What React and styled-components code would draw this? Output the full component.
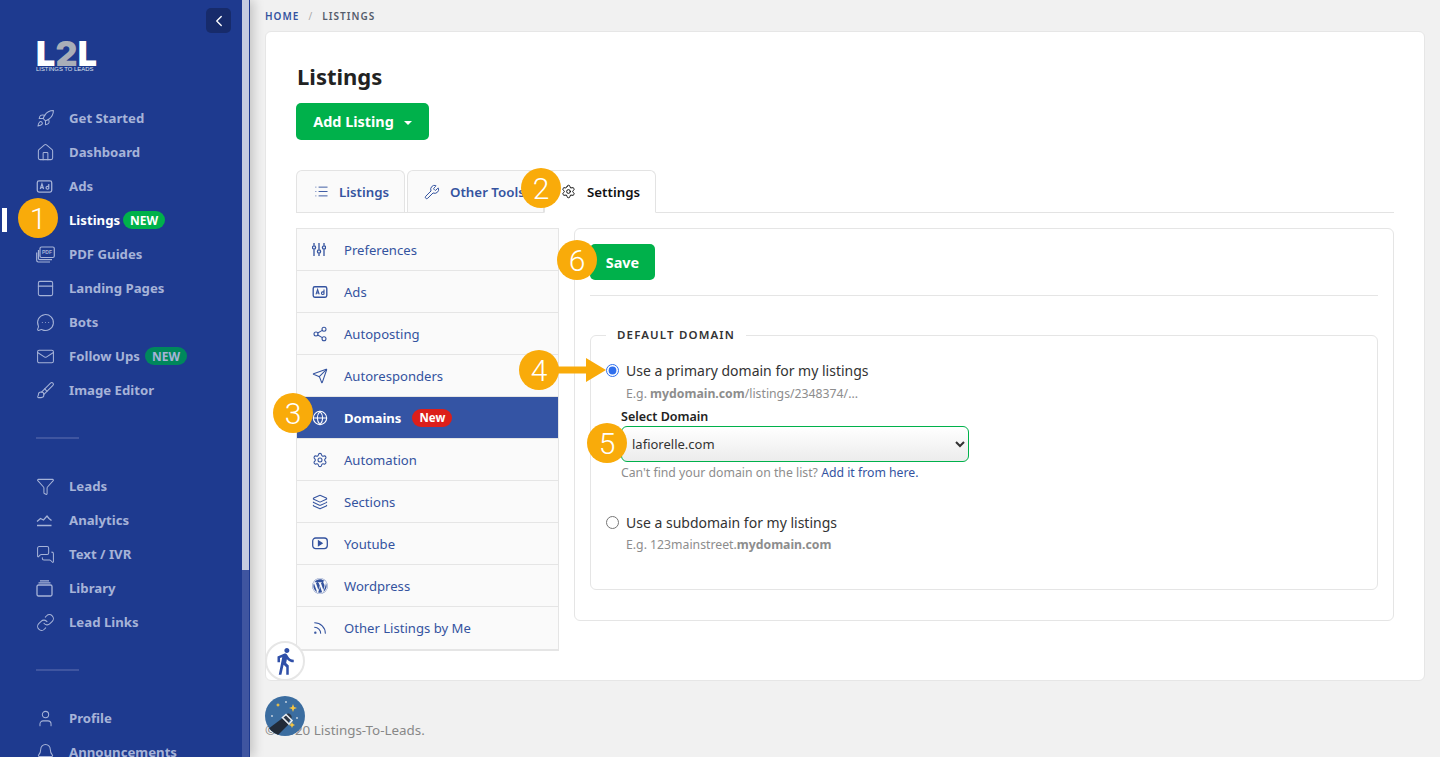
import React from "react";
import styled, { createGlobalStyle } from "styled-components";
import {
  Rocket, House, PanelTop, MessageCircleMore, Mail, Brush, Funnel, MessagesSquare, Link, User, Bell,
  Share2, Send, Globe, Settings, Layers, Rss, List, Wrench, ChevronLeft,
} from "lucide-react";
import { FaWordpress } from "react-icons/fa";
import { MdDirectionsWalk } from "react-icons/md";

const Global = createGlobalStyle`
  html, body { margin: 0; padding: 0; height: 100%; overflow: hidden; background: #f1f1f1; }
  * { box-sizing: border-box; }
  body { font-family: "Noto Sans", "Open Sans", sans-serif; font-size: 14px; color: #222; }
`;

const Page = styled.div`
  position: relative;
  display: flex;
  width: 100vw;
  height: 100vh;
  overflow: hidden;
`;

const Sidebar = styled.aside`
  flex: 0 0 250px;
  display: flex;
  height: 100%;
  background: #1e3a8f;
  border-right: 1px solid #1e3a8f;
  box-shadow: 4px 0 10px rgba(0, 0, 0, 0.18);
  z-index: 2;
`;

const SideScroll = styled.div`
  position: relative;
  flex: 1;
  padding: 41px 0 0 36px;
  overflow: hidden;
`;

const Scrollbar = styled.div`
  flex: 0 0 7px;
  height: 100%;
  background: #3f55a0;
`;

const ScrollThumb = styled.div`
  height: 570px;
  background: #c5cce0;
`;

const Collapse = styled.button`
  position: absolute;
  top: 8px;
  right: 11px;
  width: 25px;
  height: 25px;
  padding: 0;
  border: 0;
  border-radius: 5px;
  display: flex;
  align-items: center;
  justify-content: center;
  background: #172b6b;
  color: #fff;
`;

const Logo = styled.div`
  width: 61px;
  height: 30px;
  color: #fff;
  display: flex;
  flex-direction: column;
  margin-bottom: 30px;
`;

const LogoMark = styled.div`
  display: flex;
  justify-content: space-between;
  font-family: "Inter", "Liberation Sans", sans-serif;
  font-weight: 900;
  font-size: 34px;
  line-height: 25px;
  height: 25px;
  letter-spacing: 0;
`;

const LogoTwo = styled.span`
  color: #a9aeb8;
`;

const LogoTag = styled.div`
  font-family: "Liberation Sans", sans-serif;
  font-size: 5.9px;
  line-height: 6px;
  white-space: nowrap;
  color: #dfe3ee;
`;

const NavList = styled.nav`
  display: flex;
  flex-direction: column;
`;

const NavItem = styled.a`
  position: relative;
  display: flex;
  align-items: center;
  height: 34px;
  font-size: 13.2px;
  font-weight: 700;
  color: ${(p) => (p.$active ? "#fff" : "#a6b3d8")};
  white-space: nowrap;
  &::before {
    content: ${(p) => (p.$active ? '""' : "none")};
    position: absolute;
    left: -34px;
    top: 5px;
    width: 5px;
    height: 24px;
    background: #fff;
  }
`;

const NavIcon = styled.span`
  flex: 0 0 33px;
  display: flex;
  align-items: center;
  color: #a6b3d8;
`;

const NewPill = styled.span`
  margin-left: ${(p) => (p.$dim ? "5px" : "3px")};
  height: 18px;
  width: 42px;
  border-radius: 9px;
  display: flex;
  align-items: center;
  justify-content: center;
  font-size: 12px;
  font-weight: 700;
  background: ${(p) => (p.$dim ? "#00885c" : "#00b14b")};
  color: ${(p) => (p.$dim ? "#a6b3d8" : "#fff")};
`;

const NavDivider = styled.div`
  width: 43px;
  height: 2px;
  margin: 30px 0 30px;
  background: #3f55a0;
`;

const Main = styled.main`
  flex: 1;
  min-width: 0;
  padding: 0 15px;
`;

const Crumbs = styled.div`
  display: flex;
  align-items: center;
  gap: 9px;
  height: 31px;
  font-size: 10px;
  font-weight: 600;
  letter-spacing: 1.05px;
  color: #555c6b;
`;

const CrumbLink = styled.span`
  color: #34539f;
`;

const CrumbSep = styled.span`
  color: #aaa;
  font-weight: 400;
`;

const Card = styled.section`
  background: #fff;
  border: 1px solid #e6e6e6;
  border-radius: 6px;
  padding: 29px 30px 30px 30px;
  height: 650px;
`;

const Title = styled.h1`
  margin: 0 0 12px 1px;
  font-size: 22px;
  line-height: 30px;
  font-weight: 700;
  color: #222;
`;

const GreenButton = styled.button`
  display: flex;
  align-items: center;
  justify-content: center;
  gap: 10px;
  border: 0;
  border-radius: 5px;
  background: #00b14b;
  color: #fff;
  font-family: inherit;
  font-weight: 700;
  font-size: ${(p) => p.$fs};
  width: ${(p) => p.$w};
  height: ${(p) => p.$h};
`;

const Caret = styled.span`
  width: 0;
  height: 0;
  margin-top: 2px;
  border-left: 4px solid transparent;
  border-right: 4px solid transparent;
  border-top: 4px solid #fff;
`;

const Tabs = styled.div`
  display: flex;
  gap: 2px;
  height: 43px;
  margin-top: 30px;
  border-bottom: 1px solid #e3e3e3;
`;

const Tab = styled.div`
  display: flex;
  align-items: center;
  gap: ${(p) => p.$gap};
  width: ${(p) => p.$w};
  margin-left: ${(p) => p.$ml || 0};
  padding-left: ${(p) => p.$pl};
  height: ${(p) => (p.$active ? "43px" : "42px")};
  border: 1px solid #e3e3e3;
  border-bottom: ${(p) => (p.$active ? "1px solid #fff" : "0")};
  border-radius: 6px 6px 0 0;
  background: ${(p) => (p.$active ? "#fff" : "#fafafa")};
  color: ${(p) => (p.$active ? "#111" : "#34539f")};
  font-weight: 600;
  font-size: 13.3px;
  white-space: nowrap;
  overflow: hidden;
`;

const Body = styled.div`
  display: flex;
  align-items: flex-start;
  gap: 15px;
  margin-top: 15px;
`;

const SideList = styled.div`
  flex: 0 0 263px;
  border: 1px solid #e5e5e5;
  border-bottom-width: 2px;
  background: #fafafa;
`;

const SideItem = styled.div`
  display: flex;
  align-items: center;
  height: 42px;
  padding-left: 15px;
  border-bottom: ${(p) => (p.$last ? "0" : "1px solid #e5e5e5")};
  background: ${(p) => (p.$active ? "#3454a4" : "transparent")};
  color: ${(p) => (p.$active ? "#fff" : "#34539f")};
  font-weight: ${(p) => (p.$active ? 700 : 400)};
  font-size: 13.1px;
`;

const SideIcon = styled.span`
  flex: 0 0 32px;
  display: flex;
  align-items: center;
`;

const RedPill = styled.span`
  margin-left: 11px;
  width: 40px;
  height: 18px;
  border-radius: 9px;
  display: flex;
  align-items: center;
  justify-content: center;
  background: #dc1f1a;
  color: #fff;
  font-size: 11.5px;
  font-weight: 700;
`;

const Panel = styled.div`
  flex: 1;
  height: 393px;
  padding: 15px;
  border: 1px solid #e5e5e5;
  border-radius: 6px;
`;

const Rule = styled.hr`
  margin: 15px 0 32px;
  border: 0;
  border-top: 1px solid #e5e5e5;
`;

const Fieldset = styled.fieldset`
  margin: 0;
  padding: 18px 15px 0 15px;
  height: 262px;
  border: 1px solid #e5e5e5;
  border-radius: 6px;
`;

const Legend = styled.legend`
  margin-left: 0;
  padding: 0 11px;
  font-size: 11.5px;
  line-height: 14px;
  font-weight: 600;
  letter-spacing: 1.15px;
  color: #333;
`;

const RadioRow = styled.label`
  display: flex;
  align-items: center;
  gap: 7px;
  height: 20px;
  margin-top: ${(p) => p.$mt || 0};
  color: #333;
  font-size: 14px;
`;

const Radio = styled.input`
  width: 13px;
  height: 13px;
  margin: 0;
  accent-color: #2f6fed;
`;

const Hint = styled.div`
  margin-top: ${(p) => p.$mt || "5px"};
  margin-left: ${(p) => p.$ml || "20px"};
  line-height: 18px;
  font-size: 12.25px;
  color: #8d8d8d;
`;

const HintLink = styled.span`
  color: #34539f;
`;

const DomainLabel = styled.div`
  margin: 6px 0 0 15px;
  font-size: 12.5px;
  line-height: 16px;
  font-weight: 600;
  color: #222;
`;

const DomainSelect = styled.select`
  display: block;
  width: 348px;
  height: 36px;
  margin: 1px 0 0 15px;
  padding: 0 6px;
  border: 1px solid #00b14b;
  border-radius: 6px;
  background: linear-gradient(#fff, #ececec);
  font-family: inherit;
  font-size: 13px;
  color: #333;
`;

const Footer = styled.div`
  margin-top: 40px;
  font-size: 13.4px;
  line-height: 18px;
  color: #888;
`;

const Marker = styled.div`
  position: absolute;
  left: ${(p) => p.$x - 20}px;
  top: ${(p) => p.$y - 20}px;
  width: 40px;
  height: 40px;
  border-radius: 50%;
  display: flex;
  align-items: center;
  justify-content: center;
  background: #f9ab0a;
  color: #fff;
  font-family: "Roboto", "Liberation Sans", sans-serif;
  font-weight: 300;
  font-size: 30px;
  z-index: 5;
`;

const ArrowMark = styled.svg`
  position: absolute;
  left: 555px;
  top: 358px;
  z-index: 5;
`;

const Floating = styled.div`
  position: absolute;
  left: 265px;
  top: ${(p) => p.$top}px;
  width: 40px;
  height: 40px;
  border-radius: 50%;
  display: flex;
  align-items: center;
  justify-content: center;
  overflow: hidden;
  border: ${(p) => (p.$wand ? "0" : "2px solid #e6e6e6")};
  background: ${(p) => (p.$wand ? "#3b6da0" : "#fff")};
  color: #2f4fa8;
  z-index: 4;
`;

const AdIcon = ({ size = 17, w = 1.5 }) => (
  <svg width={size} height={size} viewBox="0 0 20 20" fill="none" stroke="currentColor" strokeWidth={w}>
    <rect x="1.500" y="3.500" width="17" height="13" rx="2" />
    <path d="M5 13l2-6 2 6M5.700 11.300h2.600M15 7v6M15 10.500c-.5-1-3.200-1-3.200 1s2.700 2 3.200.8" strokeWidth="1.400" />
  </svg>
);

const PdfIcon = () => (
  <svg width="19" height="17" viewBox="0 0 19 17" fill="none" stroke="currentColor" strokeWidth="1.200">
    <rect x="4" y="1" width="14.300" height="10.500" rx="1.500" />
    <path d="M2.500 4v8.500c0 .8.500 1.200 1.300 1.200H16M.7 6.500v7.800c0 1 .6 1.700 1.600 1.700H14" />
    <text x="6" y="8.300" fontSize="5" fontWeight="700" stroke="none" fill="currentColor" fontFamily="Liberation Sans">PDF</text>
  </svg>
);

const ChartIcon = () => (
  <svg width="17" height="17" viewBox="0 0 17 17" fill="none" stroke="currentColor" strokeWidth="1.300">
    <path d="M1 13.500h14.500M1 9.500l3.500-3 3 1.500L11 4l2 2.500 2.500 2" />
  </svg>
);

const LibraryIcon = () => (
  <svg width="17" height="17" viewBox="0 0 17 17" fill="none" stroke="currentColor" strokeWidth="1.300">
    <rect x="1" y="5" width="15" height="11" rx="1.500" />
    <path d="M2.500 2.800h12M4 .8h9" />
  </svg>
);

const YoutubeIcon = () => (
  <svg width="16" height="13" viewBox="0 0 16 13" fill="none" stroke="currentColor" strokeWidth="1.300">
    <rect x=".7" y="1" width="14.600" height="10.600" rx="3" />
    <path d="M6.500 4v4.500l3.500-2.200z" fill="currentColor" />
  </svg>
);

const SlidersIcon = () => (
  <svg width="14" height="15" viewBox="0 0 14 15" fill="none" stroke="currentColor" strokeWidth="1.300">
    <path d="M2 1v2.500M2 7.500V14M7 1v6.500M7 11.500V14M12 1v2.500M12 7.500V14" />
    <circle cx="2" cy="5.500" r="1.600" />
    <circle cx="7" cy="9.500" r="1.600" />
    <circle cx="12" cy="5.500" r="1.600" />
  </svg>
);

const WandIcon = () => (
  <svg width="40" height="40" viewBox="0 0 40 40">
    <path d="M3 33L19 21l6 6-13 13H8z" fill="#222b38" />
    <path d="M18.500 20.500l3-2.500c1.500-1 3.500-.5 4.500 1s1 3.500-.5 4.500l-2.500 3z" fill="#2c3644" />
    <path d="M17.500 21.500l3.500-3 6 6-3 3.500z" fill="none" stroke="#e6ebf0" strokeWidth="1.600" />
    <path d="M28 8l1.100 2.900 2.900 1.100-2.900 1.100L28 16l-1.100-2.900-2.900-1.100 2.900-1.100z" fill="#f5c542" />
    <path d="M27 26l.9 2.100 2.100.9-2.100.9-.9 2.100-.9-2.100-2.100-.9 2.100-.9z" fill="#f5c542" />
    <path d="M13 7l.7 1.300 1.300.7-1.300.7-.7 1.300-.7-1.300L11 9l1.300-.7z" fill="#f5c542" />
    <circle cx="21" cy="6" r=".9" fill="#cfd8e3" />
    <circle cx="32" cy="22" r=".9" fill="#cfd8e3" />
    <circle cx="7" cy="20" r=".9" fill="#cfd8e3" />
  </svg>
);

const IC = { size: 19, strokeWidth: 1.3 };

const navA = [
  [<Rocket {...IC} />, "Get Started"],
  [<House {...IC} />, "Dashboard"],
  [<AdIcon />, "Ads"],
  [<AdIcon />, "Listings", "active"],
  [<PdfIcon />, "PDF Guides"],
  [<PanelTop {...IC} />, "Landing Pages"],
  [<MessageCircleMore {...IC} />, "Bots"],
  [<Mail {...IC} />, "Follow Ups", "dim"],
  [<Brush {...IC} />, "Image Editor"],
];
const navB = [
  [<Funnel {...IC} />, "Leads"],
  [<ChartIcon />, "Analytics"],
  [<MessagesSquare {...IC} />, "Text / IVR"],
  [<LibraryIcon />, "Library"],
  [<Link {...IC} />, "Lead Links"],
];
const navC = [
  [<User {...IC} />, "Profile"],
  [<Bell {...IC} />, "Announcements"],
];

const SI = { size: 16, strokeWidth: 1.6 };
const sideItems = [
  [<SlidersIcon />, "Preferences"],
  [<AdIcon size={16} w={1.700} />, "Ads"],
  [<Share2 {...SI} />, "Autoposting"],
  [<Send {...SI} />, "Autoresponders"],
  [<Globe {...SI} />, "Domains", true],
  [<Settings {...SI} />, "Automation"],
  [<Layers {...SI} />, "Sections"],
  [<YoutubeIcon />, "Youtube"],
  [<FaWordpress size={16} />, "Wordpress"],
  [<Rss {...SI} />, "Other Listings by Me"],
];

const renderNav = (items) =>
  items.map(([icon, label, flag]) => (
    <NavItem key={label} $active={flag === "active"}>
      <NavIcon>{icon}</NavIcon>
      {label}
      {flag && <NewPill $dim={flag === "dim"}>NEW</NewPill>}
    </NavItem>
  ));

export default function App() {
  return (
    <Page>
      <Global />
      <Sidebar>
        <SideScroll>
          <Collapse aria-label="Collapse"><ChevronLeft size={18} strokeWidth={1.800} /></Collapse>
          <Logo>
            <LogoMark>L<LogoTwo>2</LogoTwo>L</LogoMark>
            <LogoTag>LISTINGS TO LEADS</LogoTag>
          </Logo>
          <NavList>{renderNav(navA)}</NavList>
          <NavDivider />
          <NavList>{renderNav(navB)}</NavList>
          <NavDivider />
          <NavList>{renderNav(navC)}</NavList>
        </SideScroll>
        <Scrollbar><ScrollThumb /></Scrollbar>
      </Sidebar>
      <Main>
        <Crumbs>
          <CrumbLink>HOME</CrumbLink>
          <CrumbSep>/</CrumbSep>
          <span>LISTINGS</span>
        </Crumbs>
        <Card>
          <Title>Listings</Title>
          <GreenButton $w="133px" $h="37px" $fs="14.400px">Add Listing <Caret /></GreenButton>
          <Tabs>
            <Tab $w="109px" $gap="10px" $pl="17px"><List size={15} strokeWidth={1.500} />Listings</Tab>
            <Tab $w="137px" $gap="10px" $pl="16px"><Wrench size={16} strokeWidth={1.500} />Other Tools</Tab>
            <Tab $active $w="112px" $ml="-2px" $gap="11px" $pl="16px"><Settings size={15} strokeWidth={1.600} />Settings</Tab>
          </Tabs>
          <Body>
            <SideList>
              {sideItems.map(([icon, label, active], i) => (
                <SideItem key={label} $active={active} $last={i === sideItems.length - 1}>
                  <SideIcon>{icon}</SideIcon>
                  {label}
                  {active && <RedPill>New</RedPill>}
                </SideItem>
              ))}
            </SideList>
            <Panel>
              <GreenButton $w="65px" $h="36px" $fs="14.400px">Save</GreenButton>
              <Rule />
              <Fieldset>
                <Legend>DEFAULT DOMAIN</Legend>
                <RadioRow>
                  <Radio type="radio" name="domain" defaultChecked />
                  Use a primary domain for my listings
                </RadioRow>
                <Hint>E.g. <b>mydomain.com</b>/listings/2348374/...</Hint>
                <DomainLabel>Select Domain</DomainLabel>
                <DomainSelect defaultValue="lafiorelle.com">
                  <option>lafiorelle.com</option>
                </DomainSelect>
                <Hint $ml="15px" $mt="2px">Can't find your domain on the list? <HintLink>Add it from here.</HintLink></Hint>
                <RadioRow $mt="30px">
                  <Radio type="radio" name="domain" />
                  Use a subdomain for my listings
                </RadioRow>
                <Hint $mt="4px">E.g. 123mainstreet.<b>mydomain.com</b></Hint>
              </Fieldset>
            </Panel>
          </Body>
        </Card>
        <Footer>© 2020 Listings-To-Leads.</Footer>
      </Main>
      <Marker $x={38} $y={218}>1</Marker>
      <Marker $x={541} $y={188}>2</Marker>
      <Marker $x={293} $y={413}>3</Marker>
      <Marker $x={539} $y={370}>4</Marker>
      <Marker $x={607} $y={443}>5</Marker>
      <Marker $x={577} $y={260}>6</Marker>
      <ArrowMark width="52" height="24" viewBox="0 0 52 24">
        <path d="M0 8.500h31V0l20 12-20 12v-8.500H0z" fill="#f9ab0a" />
      </ArrowMark>
      <Floating $top={641}><MdDirectionsWalk size={30} /></Floating>
      <Floating $top={696} $wand><WandIcon /></Floating>
    </Page>
  );
}
